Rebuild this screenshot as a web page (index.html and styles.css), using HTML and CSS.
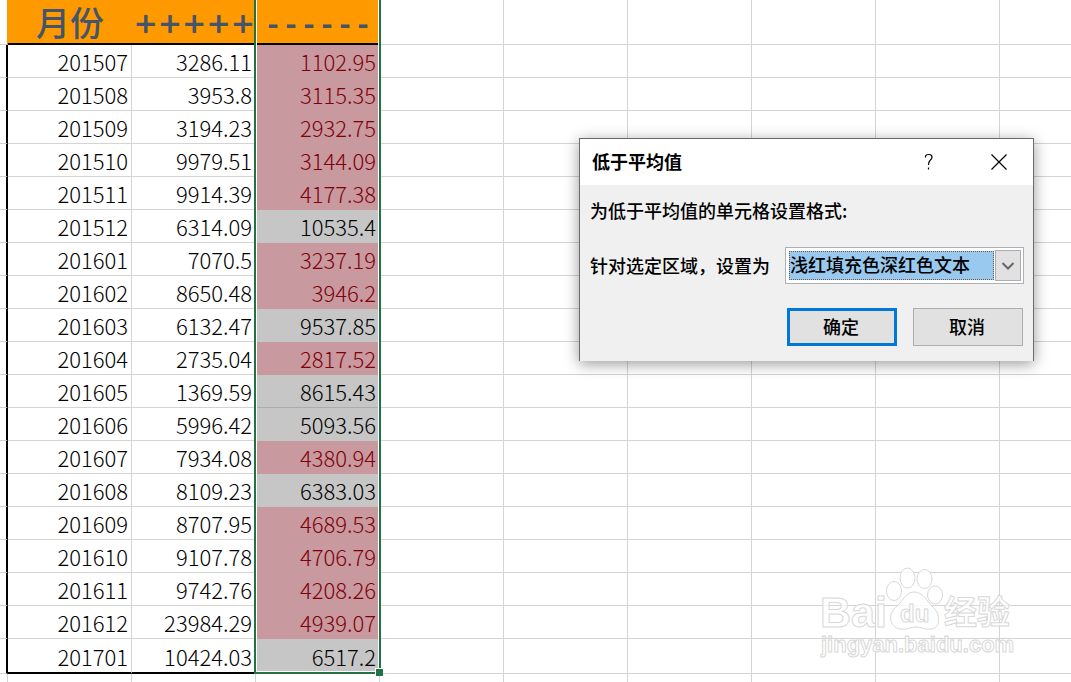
FILE: index.html
```html
<!DOCTYPE html>
<html lang="zh-CN">
<head>
<meta charset="utf-8">
<title>低于平均值</title>
<link rel="stylesheet" href="styles.css">
</head>
<body>
<main class="sheet">
<table class="grid">
<colgroup><col class="edge"><col class="col"><col class="col"><col class="col"><col class="col"><col class="col"><col class="col"><col class="col"><col class="col"><col></colgroup>
<thead>
<tr><td></td><th class="head month" scope="col">月份</th><th class="head plus" scope="col">+++++</th><th class="head minus" scope="col">------</th><td></td><td></td><td></td><td></td><td></td><td></td></tr>
</thead>
<tbody>
<tr><td></td><td>201507</td><td>3286.11</td><td class="low">1102.95</td><td></td><td></td><td></td><td></td><td></td><td></td></tr>
<tr><td></td><td>201508</td><td>3953.8</td><td class="low">3115.35</td><td></td><td></td><td></td><td></td><td></td><td></td></tr>
<tr><td></td><td>201509</td><td>3194.23</td><td class="low">2932.75</td><td></td><td></td><td></td><td></td><td></td><td></td></tr>
<tr><td></td><td>201510</td><td>9979.51</td><td class="low">3144.09</td><td></td><td></td><td></td><td></td><td></td><td></td></tr>
<tr><td></td><td>201511</td><td>9914.39</td><td class="low">4177.38</td><td></td><td></td><td></td><td></td><td></td><td></td></tr>
<tr><td></td><td>201512</td><td>6314.09</td><td class="sel">10535.4</td><td></td><td></td><td></td><td></td><td></td><td></td></tr>
<tr><td></td><td>201601</td><td>7070.5</td><td class="low">3237.19</td><td></td><td></td><td></td><td></td><td></td><td></td></tr>
<tr><td></td><td>201602</td><td>8650.48</td><td class="low">3946.2</td><td></td><td></td><td></td><td></td><td></td><td></td></tr>
<tr><td></td><td>201603</td><td>6132.47</td><td class="sel">9537.85</td><td></td><td></td><td></td><td></td><td></td><td></td></tr>
<tr><td></td><td>201604</td><td>2735.04</td><td class="low">2817.52</td><td></td><td></td><td></td><td></td><td></td><td></td></tr>
<tr><td></td><td>201605</td><td>1369.59</td><td class="sel lined">8615.43</td><td></td><td></td><td></td><td></td><td></td><td></td></tr>
<tr><td></td><td>201606</td><td>5996.42</td><td class="sel">5093.56</td><td></td><td></td><td></td><td></td><td></td><td></td></tr>
<tr><td></td><td>201607</td><td>7934.08</td><td class="low">4380.94</td><td></td><td></td><td></td><td></td><td></td><td></td></tr>
<tr><td></td><td>201608</td><td>8109.23</td><td class="sel">6383.03</td><td></td><td></td><td></td><td></td><td></td><td></td></tr>
<tr><td></td><td>201609</td><td>8707.95</td><td class="low">4689.53</td><td></td><td></td><td></td><td></td><td></td><td></td></tr>
<tr><td></td><td>201610</td><td>9107.78</td><td class="low">4706.79</td><td></td><td></td><td></td><td></td><td></td><td></td></tr>
<tr><td></td><td>201611</td><td>9742.76</td><td class="low">4208.26</td><td></td><td></td><td></td><td></td><td></td><td></td></tr>
<tr><td></td><td>201612</td><td>23984.29</td><td class="low">4939.07</td><td></td><td></td><td></td><td></td><td></td><td></td></tr>
<tr class="last"><td></td><td>201701</td><td>10424.03</td><td class="sel">6517.2</td><td></td><td></td><td></td><td></td><td></td><td></td></tr>
</tbody>
<tfoot>
<tr><td></td><td></td><td></td><td></td><td></td><td></td><td></td><td></td><td></td><td></td></tr>
</tfoot>
</table>
<div class="selection"><span class="handle"></span></div>

<svg class="watermark" viewBox="0 0 200 100" aria-label="Baidu 经验">
<g class="paw">
<ellipse cx="74" cy="31" rx="7.500" ry="9.500"/>
<ellipse cx="87.500" cy="18" rx="7.500" ry="10"/>
<ellipse cx="104.500" cy="19" rx="7.500" ry="9.500"/>
<ellipse cx="115" cy="35" rx="7.500" ry="9"/>
<path d="M94 32C85 32 83 42 75 48C68 54 69 67 80 69C87 70 91 67 96 67C101 67 105 70 112 69C121 67 120 54 114 48C106 41 104 32 94 32Z"/>
</g>
<text class="mark-bai" x="0" y="67">Bai</text>
<text class="mark-du" x="80" y="62">du</text>
<text class="mark-cn" x="124" y="64">经验</text>
<text class="mark-url" x="1" y="92">jingyan.baidu.com</text>
</svg>

<form class="dialog" role="dialog" aria-labelledby="dialog-title">
<header class="titlebar">
<h1 id="dialog-title">低于平均值</h1>
<button class="tool" type="button" aria-label="帮助"><svg width="16" height="18" viewBox="0 0 16 18"><path d="M4.500 4.500V3.500Q4.500 1.500 8 1.500Q11 1.500 11 4Q11 6 9 7.500Q7.500 9 7.500 12M7.500 14.500V16.500"/></svg></button>
<button class="tool" type="button" aria-label="关闭"><svg width="18" height="18" viewBox="0 0 18 18"><path d="M1.500 1.500L16.500 16.500M16.500 1.500L1.500 16.500"/></svg></button>
</header>
<div class="content">
<p>为低于平均值的单元格设置格式:</p>
<div class="field">
<label for="format">针对选定区域，设置为</label>
<div class="combo">
<select id="format"><option>浅红填充色深红色文本</option></select>
<span class="arrow"><svg width="14" height="10" viewBox="0 0 14 10"><path d="M1.500 2L7 7.500L12.500 2"/></svg></span>
</div>
</div>
<div class="actions">
<button class="btn primary" type="submit">确定</button>
<button class="btn" type="button">取消</button>
</div>
</div>
</form>
</main>
</body>
</html>
```
FILE: styles.css
```css
* { box-sizing: border-box; }

body {
  margin: 0;
  background: #fff;
  color: #000;
  font-family: "Noto Sans CJK SC", sans-serif;
}

.sheet {
  position: relative;
  height: 100vh;
  overflow: hidden;
}

.grid {
  width: 100%;
  table-layout: fixed;
  border-collapse: separate;
  border-spacing: 0;
}

.edge { width: 8px; }
.col { width: 124px; }

.grid td {
  height: 33px;
  padding: 0 3px 0 0;
  border-right: 1px solid #d4d4d4;
  border-bottom: 1px solid #d4d4d4;
  font-size: 22px;
  font-weight: 300;
  line-height: 28px;
  text-align: right;
}

.grid td:last-child { border-right: 0; }

.grid thead td,
.grid .head { height: 45px; padding: 0; }

.grid .head {
  border-bottom: 2px solid #000;
  background: #ff9900;
  color: #44546a;
  font-weight: 700;
}

.grid .month {
  padding-top: 5px;
  box-shadow: -1px 0 #ff9900;
  font-family: "Liberation Sans", "Noto Sans CJK SC", sans-serif;
  font-size: 34px;
  font-weight: 500;
  line-height: 38px;
}

.grid .plus {
  padding: 3px 1px 0 0;
  font-family: "DejaVu Sans", sans-serif;
  font-size: 29px;
  line-height: 40px;
  text-align: right;
}

.grid .minus {
  padding-top: 9px;
  font-family: "Liberation Mono", monospace;
  font-size: 30px;
  line-height: 34px;
  vertical-align: top;
}

.grid tbody td:first-child { padding: 0; border-right: 2px solid #000; }

.grid .low {
  border-color: #c8999f;
  background: #c8999f;
  color: #800009;
}

.grid .sel { border-color: #c6c6c6; background: #c6c6c6; }
.grid .lined { border-bottom-color: #acacac; }

.grid .last td { height: 35px; }
.grid .last td:nth-child(2),
.grid .last td:nth-child(3) { border-bottom: 2px solid #000; }

.grid tfoot td { height: 32px; border-bottom: 0; }

.selection {
  position: absolute;
  top: 0;
  left: 254px;
  width: 127px;
  height: 674px;
  border: 2px solid #217346;
  border-top: 0;
  box-shadow: inset 1px 0 #fff, inset -1px -1px #fff;
}

.handle {
  position: absolute;
  right: -4px;
  bottom: -4px;
  width: 8px;
  height: 8px;
  border: 1px solid #fff;
  border-width: 1px 0 0 1px;
  background: #217346;
}

.dialog {
  position: absolute;
  top: 138px;
  left: 579px;
  width: 455px;
  border: 1px solid #6b6b6b;
  border-bottom: 0;
  background: #f0f0f0;
  box-shadow: 0 3px 14px rgba(0, 0, 0, 0.4);
  font-size: 18px;
}

.titlebar {
  display: flex;
  align-items: center;
  height: 46px;
  padding: 0 11px 0 12px;
  background: #fff;
}

.titlebar h1 {
  flex: 1;
  margin: 0;
  padding-bottom: 2px;
  font-size: 18px;
  font-weight: 700;
  line-height: 26px;
}

.tool {
  display: grid;
  place-items: center;
  width: 46px;
  height: 32px;
  margin-left: 24px;
  padding: 0;
  border: 0;
  background: none;
}

.tool path { fill: none; stroke: #000; stroke-width: 1.2; }

.content { padding: 12px 9px 15px 10px; font-weight: 500; }
.content p { margin: 0; line-height: 26px; }

.field {
  display: flex;
  align-items: center;
  justify-content: space-between;
  margin-top: 24px;
}

.field label { padding-bottom: 2px; }

.combo {
  display: flex;
  width: 239px;
  height: 37px;
  padding: 2px;
  border: 1px solid #adb0b6;
  background: #fff;
}

.combo select {
  flex: 1;
  min-width: 0;
  margin: 1px;
  padding: 0 0 4px;
  border: 1px dotted #74594a;
  border-radius: 0;
  appearance: none;
  background: #99c9ef;
  color: #000;
  font: inherit;
  line-height: 24px;
}

.arrow {
  display: grid;
  place-items: center;
  width: 26px;
  border: 1px solid #adadad;
  background: #e1e1e1;
  pointer-events: none;
}

.arrow path { fill: none; stroke: #666; stroke-width: 2; }

.actions {
  display: flex;
  justify-content: flex-end;
  gap: 16px;
  margin-top: 24px;
  padding-right: 1px;
}

.btn {
  width: 110px;
  height: 38px;
  padding: 0 2px 2px 0;
  border: 1px solid #adadad;
  background: #e1e1e1;
  color: #000;
  font: inherit;
}

.primary { border: 3px solid #0078d7; }

.watermark {
  position: absolute;
  top: 560px;
  left: 820px;
  width: 200px;
  height: 100px;
  fill: #fff;
  fill-opacity: 0.8;
  stroke: #d8d8d8;
  stroke-width: 1;
  font-family: "Liberation Sans", "Noto Sans CJK SC", sans-serif;
  font-weight: 700;
}

.mark-bai { font-size: 43px; }
.mark-du { font-size: 24px; }
.mark-cn { font-size: 33px; }
.mark-url { font-size: 22px; }
```
